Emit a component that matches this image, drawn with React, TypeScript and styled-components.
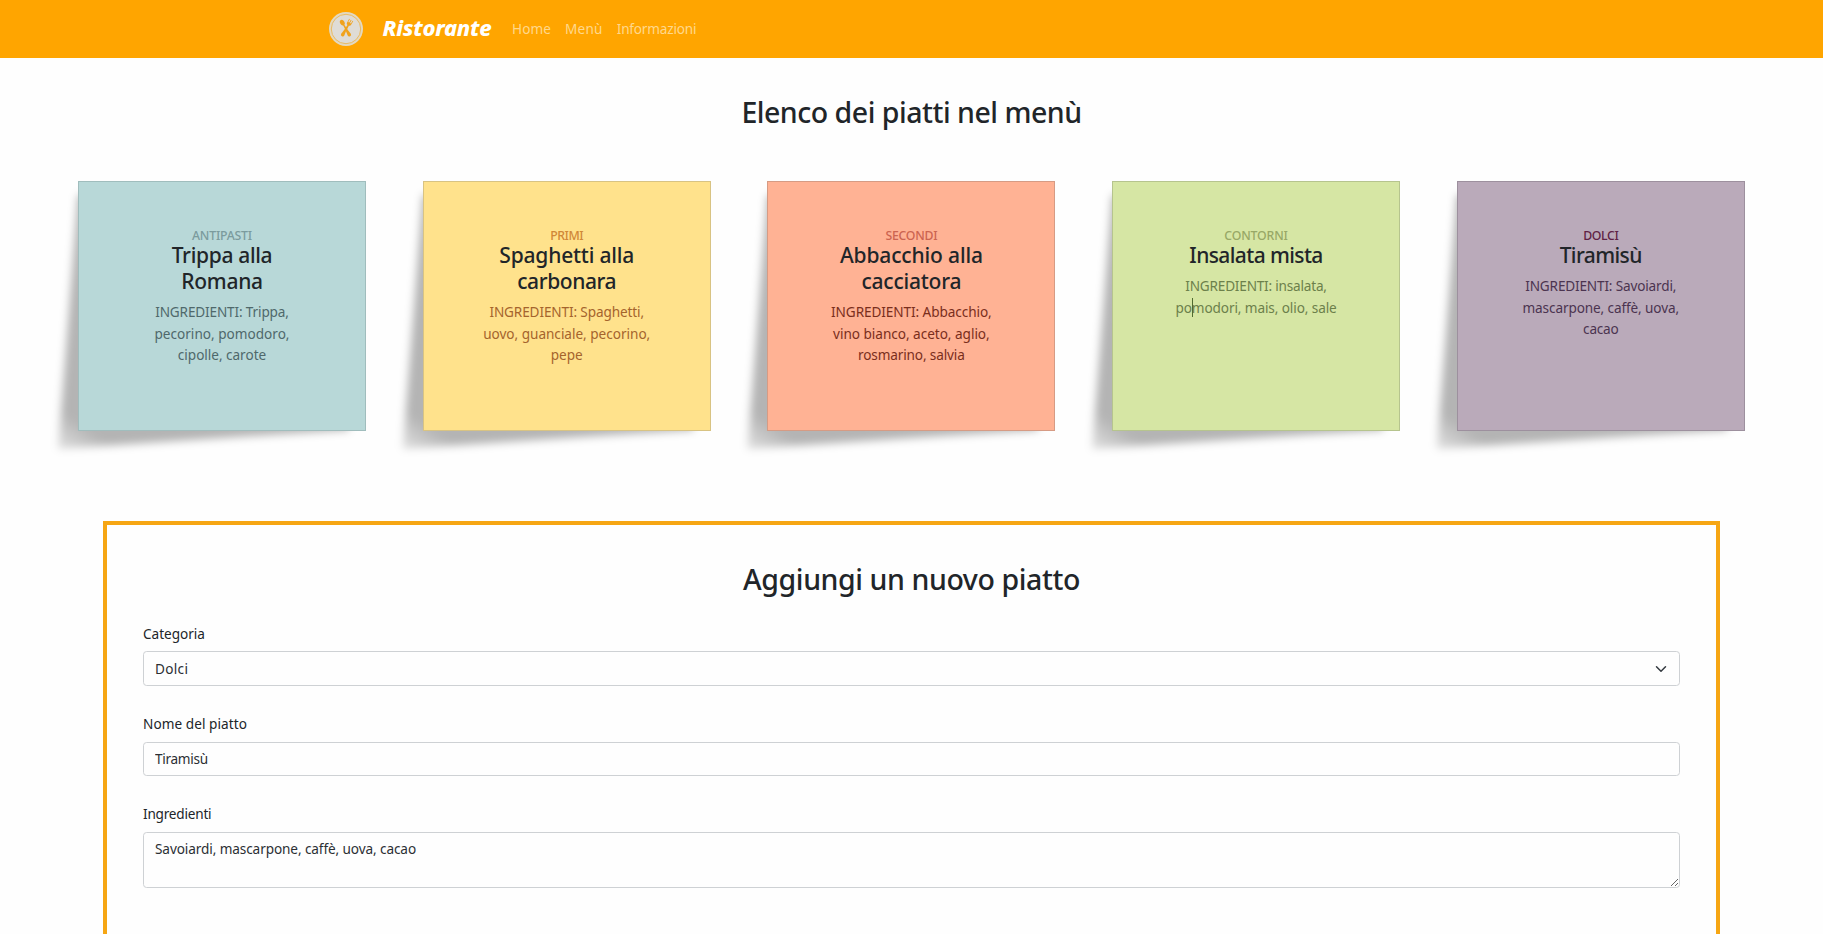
import React, { Fragment } from 'react';
import styled, { createGlobalStyle } from 'styled-components';

const GlobalStyle = createGlobalStyle`
  *, *::before, *::after { box-sizing: border-box; }
  html, body { height: 100%; }
  body {
    margin: 0;
    overflow: hidden;
    background: #fefefe;
    color: #212529;
    font-family: "Noto Sans", "Open Sans", sans-serif;
    font-size: 13.6px;
    line-height: 21.6px;
  }
  #root { height: 100%; overflow: hidden; }
`;

const Navbar = styled.nav`
  display: flex;
  align-items: center;
  height: 58px;
  padding-left: 329px;
  background: #ffa500;
`;

const Logo = styled.svg`
  width: 34px;
  height: 34px;
  margin-right: 19.5px;
`;

const Brand = styled.a`
  width: 110px;
  margin-right: 19.5px;
  padding-bottom: 4px;
  color: #fff;
  font-size: 22px;
  font-style: italic;
  font-weight: 800;
  line-height: 30px;
  letter-spacing: -0.28px;
`;

const NavLinks = styled.div`
  display: flex;
  gap: 14px;
`;

const NavLink = styled.a<{ $tracking: number }>`
  color: #ffd88c;
  letter-spacing: ${(p) => p.$tracking}px;
`;

const PageTitle = styled.h2<{ $tracking: number }>`
  margin: 0;
  text-align: center;
  font-size: 28.5px;
  font-weight: 500;
  line-height: 36px;
  letter-spacing: ${(p) => p.$tracking}px;
`;

const MenuSection = styled.section`
  padding: 36px 78px 0;
`;

const DishList = styled.div`
  display: flex;
  gap: 56.7px;
  margin-top: 51px;
`;

const DishSlot = styled.div`
  position: relative;
  z-index: 0;
`;

/* Soft shadow that makes the lower-left corner of the note look lifted. */
const LiftedShadow = styled.div`
  position: absolute;
  z-index: -1;
  inset: 0 0 -20px -20px;
  filter: blur(4px);

  &::before {
    content: "";
    position: absolute;
    inset: 0;
    background: linear-gradient(35deg, rgba(0, 0, 0, 0.1), rgba(0, 0, 0, 0.29) 9%);
    clip-path: polygon(20px 14px, 280px 14px, 291px 249px, 180px 256px, 0 268px);
  }
`;

const Note = styled.article<{ $fill: string; $edge: string }>`
  width: 288px;
  height: 250px;
  padding-top: 46px;
  border: 1px solid ${(p) => p.$edge};
  background: ${(p) => p.$fill};
  text-align: center;
`;

const Category = styled.div<{ $ink: string; $tracking: number }>`
  margin-bottom: -1px;
  color: ${(p) => p.$ink};
  font-size: 12.3px;
  font-weight: 500;
  line-height: 15px;
  letter-spacing: ${(p) => p.$tracking}px;
`;

const DishName = styled.h5`
  margin: 0 0 7px;
  font-size: 21px;
  font-weight: 500;
  line-height: 26px;
`;

const Ingredients = styled.p<{ $ink: string }>`
  margin: 0;
  color: ${(p) => p.$ink};
`;

const Line = styled.span<{ $tracking: number }>`
  display: block;
  letter-spacing: ${(p) => p.$tracking}px;
`;

const Caret = styled.span`
  position: relative;

  &::after {
    content: "";
    position: absolute;
    left: 0;
    top: 0;
    width: 1px;
    height: 19px;
    background: #4f6a30;
  }
`;

const FormPanel = styled.form`
  height: 460px;
  margin: 90px 103px 0;
  padding: 36px 36px 0;
  border: 4px solid #f6a614;
`;

const Fields = styled.div`
  margin-top: 26px;
`;

const Field = styled.div<{ $gap: number }>`
  display: flex;
  flex-direction: column;
  gap: ${(p) => p.$gap}px;
  margin-bottom: 27px;
`;

const Label = styled.label<{ $tracking: number }>`
  line-height: 22px;
  letter-spacing: ${(p) => p.$tracking}px;
`;

const SelectWrap = styled.div`
  display: grid;
  align-items: center;

  & > * { grid-area: 1 / 1; }
`;

const Chevron = styled.svg`
  justify-self: end;
  width: 12px;
  height: 12px;
  margin-right: 13px;
  pointer-events: none;
`;

const controlStyle = `
  display: block;
  width: 100%;
  margin: 0;
  border: 1px solid #ced1d4;
  border-radius: 3.6px;
  background: #fefefe;
  color: #2b2f33;
  font-family: inherit;
  font-size: 13.6px;
  outline: none;
`;

const Select = styled.select`
  ${controlStyle}
  appearance: none;
  height: 35px;
  padding: 0 11px;
  line-height: 22px;
  letter-spacing: 0.3px;
`;

const Input = styled.input`
  ${controlStyle}
  height: 34px;
  padding: 0 11px 2px;
  line-height: 22px;
  letter-spacing: -0.3px;
`;

const TextArea = styled.textarea`
  ${controlStyle}
  height: 56px;
  padding: 5px 11px;
  line-height: 21.6px;
  letter-spacing: -0.1px;
  resize: vertical;
`;

type TextLine = { text: string; tracking: number; caretAt?: number };

type Dish = {
  category: string;
  categoryTracking: number;
  fill: string;
  edge: string;
  accent: string;
  ink: string;
  name: TextLine[];
  ingredients: TextLine[];
};

const dishes: Dish[] = [
  {
    category: 'ANTIPASTI', categoryTracking: -0.21,
    fill: '#b8d8d8', edge: '#a0bdbd', accent: '#7b9b9d', ink: '#4f686b',
    name: [{ text: 'Trippa alla', tracking: -0.32 }, { text: 'Romana', tracking: -0.26 }],
    ingredients: [
      { text: 'INGREDIENTI: Trippa,', tracking: -0.153 },
      { text: 'pecorino, pomodoro,', tracking: 0 },
      { text: 'cipolle, carote', tracking: -0.03 },
    ],
  },
  {
    category: 'PRIMI', categoryTracking: -0.43,
    fill: '#ffe28c', edge: '#d8c383', accent: '#d08737', ink: '#a5642c',
    name: [{ text: 'Spaghetti alla', tracking: -0.19 }, { text: 'carbonara', tracking: -0.4 }],
    ingredients: [
      { text: 'INGREDIENTI: Spaghetti,', tracking: -0.127 },
      { text: 'uovo, guanciale, pecorino,', tracking: -0.02 },
      { text: 'pepe', tracking: -0.06 },
    ],
  },
  {
    category: 'SECONDI', categoryTracking: -0.27,
    fill: '#ffb294', edge: '#d69b84', accent: '#cc6450', ink: '#7a2e1c',
    name: [{ text: 'Abbacchio alla', tracking: -0.14 }, { text: 'cacciatora', tracking: -0.22 }],
    ingredients: [
      { text: 'INGREDIENTI: Abbacchio,', tracking: -0.08 },
      { text: 'vino bianco, aceto, aglio,', tracking: -0.03 },
      { text: 'rosmarino, salvia', tracking: -0.14 },
    ],
  },
  {
    category: 'CONTORNI', categoryTracking: -0.16,
    fill: '#d6e6a4', edge: '#b6c48e', accent: '#98a866', ink: '#6c804b',
    name: [{ text: 'Insalata mista', tracking: -0.6 }],
    ingredients: [
      { text: 'INGREDIENTI: insalata,', tracking: -0.205 },
      { text: 'pomodori, mais, olio, sale', tracking: -0.104, caretAt: 2 },
    ],
  },
  {
    category: 'DOLCI', categoryTracking: -0.38,
    fill: '#baaaba', edge: '#9d909e', accent: '#5f2245', ink: '#4b3450',
    name: [{ text: 'Tiramisù', tracking: -0.59 }],
    ingredients: [
      { text: 'INGREDIENTI: Savoiardi,', tracking: -0.168 },
      { text: 'mascarpone, caffè, uova,', tracking: -0.117 },
      { text: 'cacao', tracking: -0.25 },
    ],
  },
];

function Lines({ lines }: { lines: TextLine[] }) {
  return (
    <>
      {lines.map((l) => (
        <Line key={l.text} $tracking={l.tracking}>
          {l.caretAt ? (
            <Fragment>
              {l.text.slice(0, l.caretAt)}
              <Caret />
              {l.text.slice(l.caretAt)}
            </Fragment>
          ) : (
            l.text
          )}
        </Line>
      ))}
    </>
  );
}

function DishCard({ dish }: { dish: Dish }) {
  return (
    <DishSlot>
      <LiftedShadow />
      <Note $fill={dish.fill} $edge={dish.edge}>
        <Category $ink={dish.accent} $tracking={dish.categoryTracking}>{dish.category}</Category>
        <DishName><Lines lines={dish.name} /></DishName>
        <Ingredients $ink={dish.ink}><Lines lines={dish.ingredients} /></Ingredients>
      </Note>
    </DishSlot>
  );
}

function RestaurantLogo() {
  return (
    <Logo viewBox="0 0 34 34" aria-hidden="true">
      <circle cx="17" cy="17" r="17" fill="#e3d9c2" />
      <circle cx="17" cy="17" r="14.7" fill="#dfdcd6" stroke="#eab553" strokeWidth="0.9" />
      <g transform="rotate(-30 17 17)" fill="#f0a21c">
        <ellipse cx="17" cy="9.6" rx="2.2" ry="3" />
        <path d="M16.4 12h1.2l.4 6h-2z" />
        <path d="M16.2 17h1.6l1 6.5a1.8 1.8 0 0 1-3.6 0z" />
      </g>
      <g transform="rotate(30 17 17)" fill="#f0a21c">
        <path d="M14.7 6.6h.7v3.2h1.2V6.6h.8v3.2h1.2V6.6h.7v4.2c0 1.2-.8 1.7-1.5 1.9l.3 5.3h-2.2l.3-5.3c-.7-.2-1.5-.7-1.5-1.9z" />
        <path d="M16.2 17h1.6l1 6.5a1.8 1.8 0 0 1-3.6 0z" />
      </g>
    </Logo>
  );
}

export default function App() {
  return (
    <>
      <GlobalStyle />
      <Navbar>
        <RestaurantLogo />
        <Brand>Ristorante</Brand>
        <NavLinks>
          <NavLink $tracking={0.07}>Home</NavLink>
          <NavLink $tracking={0.24}>Menù</NavLink>
          <NavLink $tracking={-0.2}>Informazioni</NavLink>
        </NavLinks>
      </Navbar>
      <MenuSection>
        <PageTitle $tracking={-0.484}>Elenco dei piatti nel menù</PageTitle>
        <DishList>
          {dishes.map((d) => <DishCard key={d.category} dish={d} />)}
        </DishList>
      </MenuSection>
      <FormPanel>
        <PageTitle $tracking={-0.41}>Aggiungi un nuovo piatto</PageTitle>
        <Fields>
          <Field $gap={6}>
            <Label htmlFor="categoria" $tracking={-0.04}>Categoria</Label>
            <SelectWrap>
              <Select id="categoria" defaultValue="Dolci">
                <option>Dolci</option>
              </Select>
              <Chevron viewBox="0 0 16 16">
                <path d="m2 5 6 6 6-6" fill="none" stroke="#343a40" strokeWidth="2" strokeLinecap="round" strokeLinejoin="round" />
              </Chevron>
            </SelectWrap>
          </Field>
          <Field $gap={7}>
            <Label htmlFor="nome" $tracking={0.057}>Nome del piatto</Label>
            <Input id="nome" defaultValue="Tiramisù" />
          </Field>
          <Field $gap={7}>
            <Label htmlFor="ingredienti" $tracking={-0.21}>Ingredienti</Label>
            <TextArea id="ingredienti" spellCheck={false} defaultValue="Savoiardi, mascarpone, caffè, uova, cacao" />
          </Field>
        </Fields>
      </FormPanel>
    </>
  );
}
